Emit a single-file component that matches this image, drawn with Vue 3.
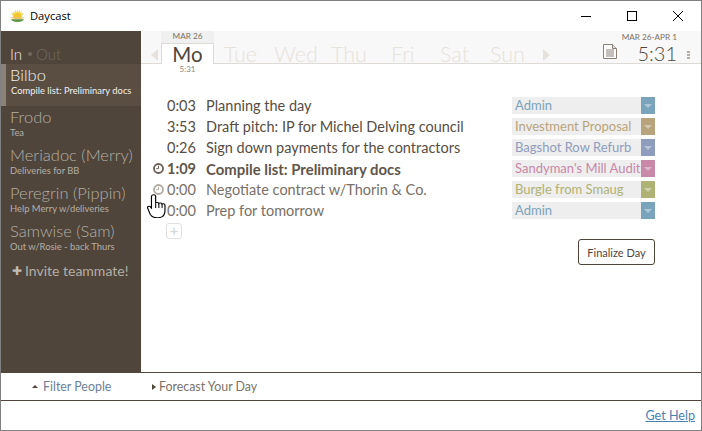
<script setup>
const people = [
  { name: 'Bilbo', note: 'Compile list: Preliminary docs', active: true },
  { name: 'Frodo', note: 'Tea' },
  { name: 'Meriadoc (Merry)', note: 'Deliveries for BB' },
  { name: 'Peregrin (Pippin)', note: 'Help Merry w/deliveries' },
  { name: 'Samwise (Sam)', note: 'Out w/Rosie - back Thurs' }
]
const days = [
  { label: 'Tue', width: 32, gap: 10 },
  { label: 'Wed', width: 40, gap: 18 },
  { label: 'Thu', width: 34, gap: 17 },
  { label: 'Fri', width: 20, gap: 26 },
  { label: 'Sat', width: 27, gap: 29 },
  { label: 'Sun', width: 34, gap: 23 }
]
const tasks = [
  { time: '0:03', title: 'Planning the day', project: 'Admin', color: '#7aa3bc' },
  { time: '3:53', title: 'Draft pitch: IP for Michel Delving council', project: 'Investment Proposal', color: '#b8a47c' },
  { time: '0:26', title: 'Sign down payments for the contractors', project: 'Bagshot Row Refurb', color: '#8e9dbd' },
  { time: '1:09', title: 'Compile list: Preliminary docs', project: "Sandyman's Mill Audit", color: '#c888a8', clock: 'on', bold: true },
  { time: '0:00', title: 'Negotiate contract w/Thorin & Co.', project: 'Burgle from Smaug', color: '#aeb274', clock: 'off', dim: true },
  { time: '0:00', title: 'Prep for tomorrow', project: 'Admin', color: '#7aa3bc', dim: true }
]
</script>

<template>
  <div class="window">
    <header class="titlebar">
      <svg class="logo" width="15" height="14" viewBox="0 0 15 14">
        <path d="M7.500 0l.7 3 1.700-2.400-.1 3 2.500-1.600-1 2.600 2.600-.5-1.500 2.400H2.600L1 4.100l2.600.5-1-2.600 2.500 1.600L5 .6l1.700 2.400z" fill="#f4dc6a"/>
        <path d="M3 8.500a4.500 4.500 0 0 1 9 0z" fill="#f2c52c"/>
        <path d="M0 8.500h15c-1.500 1-4 1.300-7.500 1.300S1.500 9.500 0 8.500z" fill="#e3ac3a"/>
        <path d="M1 10.200h13c-1 1.800-3 2.800-6.500 2.800S2 12 1 10.200z" fill="#5c9440"/>
      </svg>
      <span class="app-name">Daycast</span>
      <div class="win-controls">
        <svg width="12" height="12" viewBox="0 0 12 12"><path d="M1 6.500h10" stroke="#000" fill="none"/></svg>
        <svg width="12" height="12" viewBox="0 0 12 12"><rect x="1.500" y="1.500" width="9" height="9" stroke="#000" fill="none"/></svg>
        <svg width="12" height="12" viewBox="0 0 12 12"><path d="M1 1l10 10M11 1L1 11" stroke="#000" fill="none"/></svg>
      </div>
    </header>

    <div class="body">
      <aside class="sidebar">
        <div class="status"><span class="in">In</span><i class="dot"></i><span class="out">Out</span></div>
        <div v-for="p in people" :key="p.name" class="person" :class="{ active: p.active }">
          <div class="person-name">{{ p.name }}</div>
          <div class="person-note">{{ p.note }}</div>
        </div>
        <div class="invite"><span class="plus">✚</span>Invite teammate!</div>
      </aside>

      <main class="main">
        <div class="week">
          <span class="arrow-left"></span>
          <div class="today">
            <div class="today-date">MAR 26</div>
            <div class="today-tab">Mo</div>
            <div class="today-time">5:31</div>
          </div>
          <span
            v-for="d in days"
            :key="d.label"
            class="day"
            :style="{ width: d.width + 'px', marginLeft: d.gap + 'px' }"
          >{{ d.label }}</span>
          <span class="arrow-right"></span>
          <div class="week-total">
            <svg class="doc" width="14" height="15" viewBox="0 0 14 15">
              <path d="M.5.500h9l4 4v10H.500z" fill="#fff" stroke="#8a8076"/>
              <path d="M9.500.500v4h4" fill="#ddd" stroke="#8a8076"/>
              <path d="M3 6h8M3 8h8M3 10h8M3 12h8" stroke="#8a8076"/>
            </svg>
            <div class="total-text">
              <div class="total-range">MAR 26-APR 1</div>
              <div class="total-time">5:31</div>
            </div>
            <div class="dots"><i></i><i></i><i></i></div>
          </div>
        </div>

        <div class="content">
          <ul class="tasks">
            <li v-for="(t, i) in tasks" :key="i" class="task" :class="{ bold: t.bold, dim: t.dim }">
              <span class="gutter">
                <svg v-if="t.clock" class="clock" :class="t.clock" width="11" height="11" viewBox="0 0 11 11">
                  <circle cx="5.500" cy="5.500" r="4.500" fill="none" stroke="currentColor" stroke-width="1.800"/>
                  <path d="M5.500 2.800v2.900H3.300" fill="none" stroke="currentColor"/>
                </svg>
              </span>
              <span class="time">{{ t.time }}</span>
              <span class="title">{{ t.title }}</span>
              <span class="project">
                <span class="project-name" :style="{ color: t.color }">{{ t.project }}</span>
                <span class="caret-box" :style="{ background: t.color }"><i></i></span>
              </span>
            </li>
          </ul>
          <div class="add-row"><span class="add">+</span></div>
          <div class="actions"><button class="finalize">Finalize Day</button></div>
          <svg class="cursor" width="19" height="24" viewBox="0.300 0.600 14.900 22" preserveAspectRatio="none">
            <path d="M5.500 1.200c1 0 1.600.8 1.600 1.800v6c.3-1 2.300-1 2.500.3.500-.9 2.300-.7 2.500.6.600-.7 2.300-.4 2.300 1v5c0 3-1.500 6-5 6.500-3.500.3-5.500-1-6.500-3L.8 13.500c-.5-1.200 1-2.200 2-1.300l1 1.300V3c0-1 .7-1.800 1.700-1.800z" fill="#fff" stroke="#000" stroke-width=".9"/>
            <path d="M7.100 9v4.500M9.600 9.300v4.200M12.100 10v3.500" stroke="#000" stroke-width=".8" fill="none"/>
          </svg>
        </div>
      </main>
    </div>

    <div class="panels">
      <span class="panel filter"><i class="tri-up"></i>Filter People</span>
      <span class="panel forecast"><i class="tri-right"></i>Forecast Your Day</span>
    </div>
    <footer class="footer"><a class="help">Get Help</a></footer>
  </div>
</template>

<style scoped>
.window {
  width: 702px;
  height: 431px;
  box-sizing: border-box;
  border: 1px solid #808080;
  display: flex;
  flex-direction: column;
  background: #fff;
  font-family: Lato, "Open Sans", sans-serif;
  overflow: hidden;
}
.titlebar {
  height: 30px;
  flex: none;
  display: flex;
  align-items: center;
  font-family: "Open Sans", sans-serif;
  font-size: 11.200px;
  color: #000;
}
.app-name { margin-bottom: 2px; }
.logo { margin-left: 9px; margin-right: 5px; }
.win-controls {
  margin-left: auto;
  display: flex;
  gap: 34px;
  margin-right: 17px;
}
.body { flex: 1; display: flex; min-height: 0; }
.sidebar {
  width: 140px;
  flex: none;
  background: #4f453b;
  padding-top: 13px;
  box-sizing: border-box;
}
.status {
  height: 20px;
  padding-left: 9px;
  font-size: 15px;
  display: flex;
  align-items: center;
  font-weight: 300;
}
.in { color: #efebe6; }
.out { color: #736a5f; }
.dot {
  width: 4px;
  height: 4px;
  border-radius: 50%;
  background: #736a5f;
  margin: 0 4px 0 6px;
}
.person { padding: 0 0 5px 9px; color: #b5afa6; }
.person.active {
  background: #5a4e42;
  border-left: 5px solid #8a8278;
  padding: 0 0 9px 4px;
  color: #f3f0ec;
}
.person-name {
  font-size: 16.500px;
  line-height: 22px;
  font-weight: 300;
  white-space: nowrap;
}
.person-note {
  font-size: 9.400px;
  line-height: 13px;
  margin-top: -2px;
  white-space: nowrap;
}
.person.active .person-note { padding-left: 1px; }
.invite {
  margin-top: 4px;
  padding-left: 11px;
  font-size: 14px;
  color: #b5afa6;
  display: flex;
  align-items: center;
  white-space: nowrap;
}
.plus { font-size: 12px; margin-right: 3px; color: #c0bab2; }
.main { flex: 1; display: flex; flex-direction: column; min-width: 0; }
.week {
  height: 33px;
  flex: none;
  box-sizing: border-box;
  background: #f8f8f8;
  border-bottom: 1px solid #dedad5;
  display: flex;
  align-items: flex-end;
  padding-left: 10px;
  position: relative;
}
.arrow-left, .arrow-right {
  width: 0;
  height: 0;
  border-top: 6px solid transparent;
  border-bottom: 6px solid transparent;
  margin-bottom: 2px;
}
.arrow-left { border-right: 7px solid #e5e2dd; }
.arrow-right { border-left: 7px solid #e5e2dd; margin-left: 19px; }
.today {
  width: 53px;
  margin-left: 3px;
  position: relative;
  margin-bottom: -1px;
  text-align: center;
}
.today-date {
  position: absolute;
  top: 0;
  left: 0;
  right: 0;
  height: 12px;
  background: #f0f0f0;
  font-size: 8.200px;
  line-height: 11px;
  color: #7b7167;
}
.today-tab {
  height: 21px;
  box-sizing: border-box;
  margin-top: 12px;
  background: #fff;
  border: 1px solid #dedad5;
  border-bottom: none;
  position: relative;
  font-size: 20.500px;
  line-height: 21px;
  color: #4f453b;
}
.today-time {
  position: absolute;
  top: 34px;
  left: 0;
  right: 0;
  font-size: 8px;
  line-height: 9px;
  color: #8f877d;
}
.day {
  flex: none;
  font-size: 21.500px;
  line-height: 17px;
  font-weight: 300;
  color: #e6e2dc;
  white-space: nowrap;
}
.week-total {
  margin-left: auto;
  margin-right: 11px;
  display: flex;
  align-items: flex-end;
  height: 100%;
}
.doc { margin-bottom: 4px; }
.total-text { margin-left: 4px; text-align: right; width: 56px; }
.total-range {
  font-size: 8.200px;
  line-height: 11px;
  margin-top: 2px;
  color: #7b7167;
  white-space: nowrap;
}
.total-time {
  font-size: 20px;
  line-height: 20px;
  font-weight: 300;
  color: #4f453b;
}
.dots {
  display: flex;
  flex-direction: column;
  gap: 1px;
  margin: 0 0 4px 10px;
}
.dots i { width: 3px; height: 2px; background: #b5afa6; }
.content {
  flex: 1;
  position: relative;
  padding: 31px 46px 0 10px;
}
.tasks { list-style: none; margin: 0; padding: 0; }
.task {
  display: flex;
  align-items: center;
  height: 21px;
  font-size: 14.500px;
  color: #574d43;
  white-space: nowrap;
}
.task.dim { color: #777067; }
.task.bold .title, .task.bold .time { font-weight: 700; color: #5f554b; }
.task.bold .title { font-size: 14.900px; }
.gutter { width: 14px; flex: none; display: flex; padding-left: 2px; }
.clock { display: block; }
.clock.on { color: #6a6056; }
.clock.off { color: #b0aaa3; }
.time { width: 39px; flex: none; }
.title { flex: 1; min-width: 0; }
.project {
  width: 143px;
  height: 17px;
  flex: none;
  display: flex;
  background: #eeeeee;
  font-size: 13px;
}
.project-name {
  flex: 1;
  padding-left: 3px;
  line-height: 17px;
  overflow: hidden;
  white-space: nowrap;
  min-width: 0;
}
.caret-box {
  width: 14px;
  flex: none;
  display: flex;
  align-items: center;
  justify-content: center;
}
.caret-box i {
  width: 0;
  height: 0;
  border-left: 4px solid transparent;
  border-right: 4px solid transparent;
  border-top: 4px solid rgba(255, 255, 255, .4);
}
.add-row { padding: 2px 0 0 15px; }
.add {
  display: block;
  width: 16px;
  height: 16px;
  box-sizing: border-box;
  border: 1px solid #e0e0e0;
  border-radius: 3px;
  color: #d5d5d5;
  font-size: 15px;
  line-height: 13px;
  text-align: center;
}
.actions { display: flex; justify-content: flex-end; }
.finalize {
  width: 77px;
  height: 26px;
  padding: 0;
  background: #fff;
  border: 1px solid #4f453b;
  border-radius: 3px;
  font-family: inherit;
  font-size: 11px;
  color: #4f453b;
}
.cursor { position: absolute; left: 6px; top: 130px; }
.panels {
  height: 29px;
  flex: none;
  box-sizing: border-box;
  border-top: 1px solid #4f453b;
  border-bottom: 1px solid #4f453b;
  display: flex;
  align-items: center;
  font-size: 12.400px;
  color: #7a7168;
}
.panel { display: flex; align-items: center; white-space: nowrap; }
.filter { margin-left: 31px; color: #6d7f96; width: 120px; margin-top: -1px; }
.tri-up {
  width: 0;
  height: 0;
  border-left: 3px solid transparent;
  border-right: 3px solid transparent;
  border-bottom: 3px solid #4f453b;
  margin-right: 5px;
}
.tri-right {
  width: 0;
  height: 0;
  border-top: 3px solid transparent;
  border-bottom: 3px solid transparent;
  border-left: 4px solid #4f453b;
  margin-right: 3px;
}
.footer {
  height: 29px;
  flex: none;
  display: flex;
  justify-content: flex-end;
  align-items: center;
  padding-right: 6px;
}
.help {
  font-size: 12.600px;
  color: #4a82b4;
  text-decoration: underline;
}
</style>
